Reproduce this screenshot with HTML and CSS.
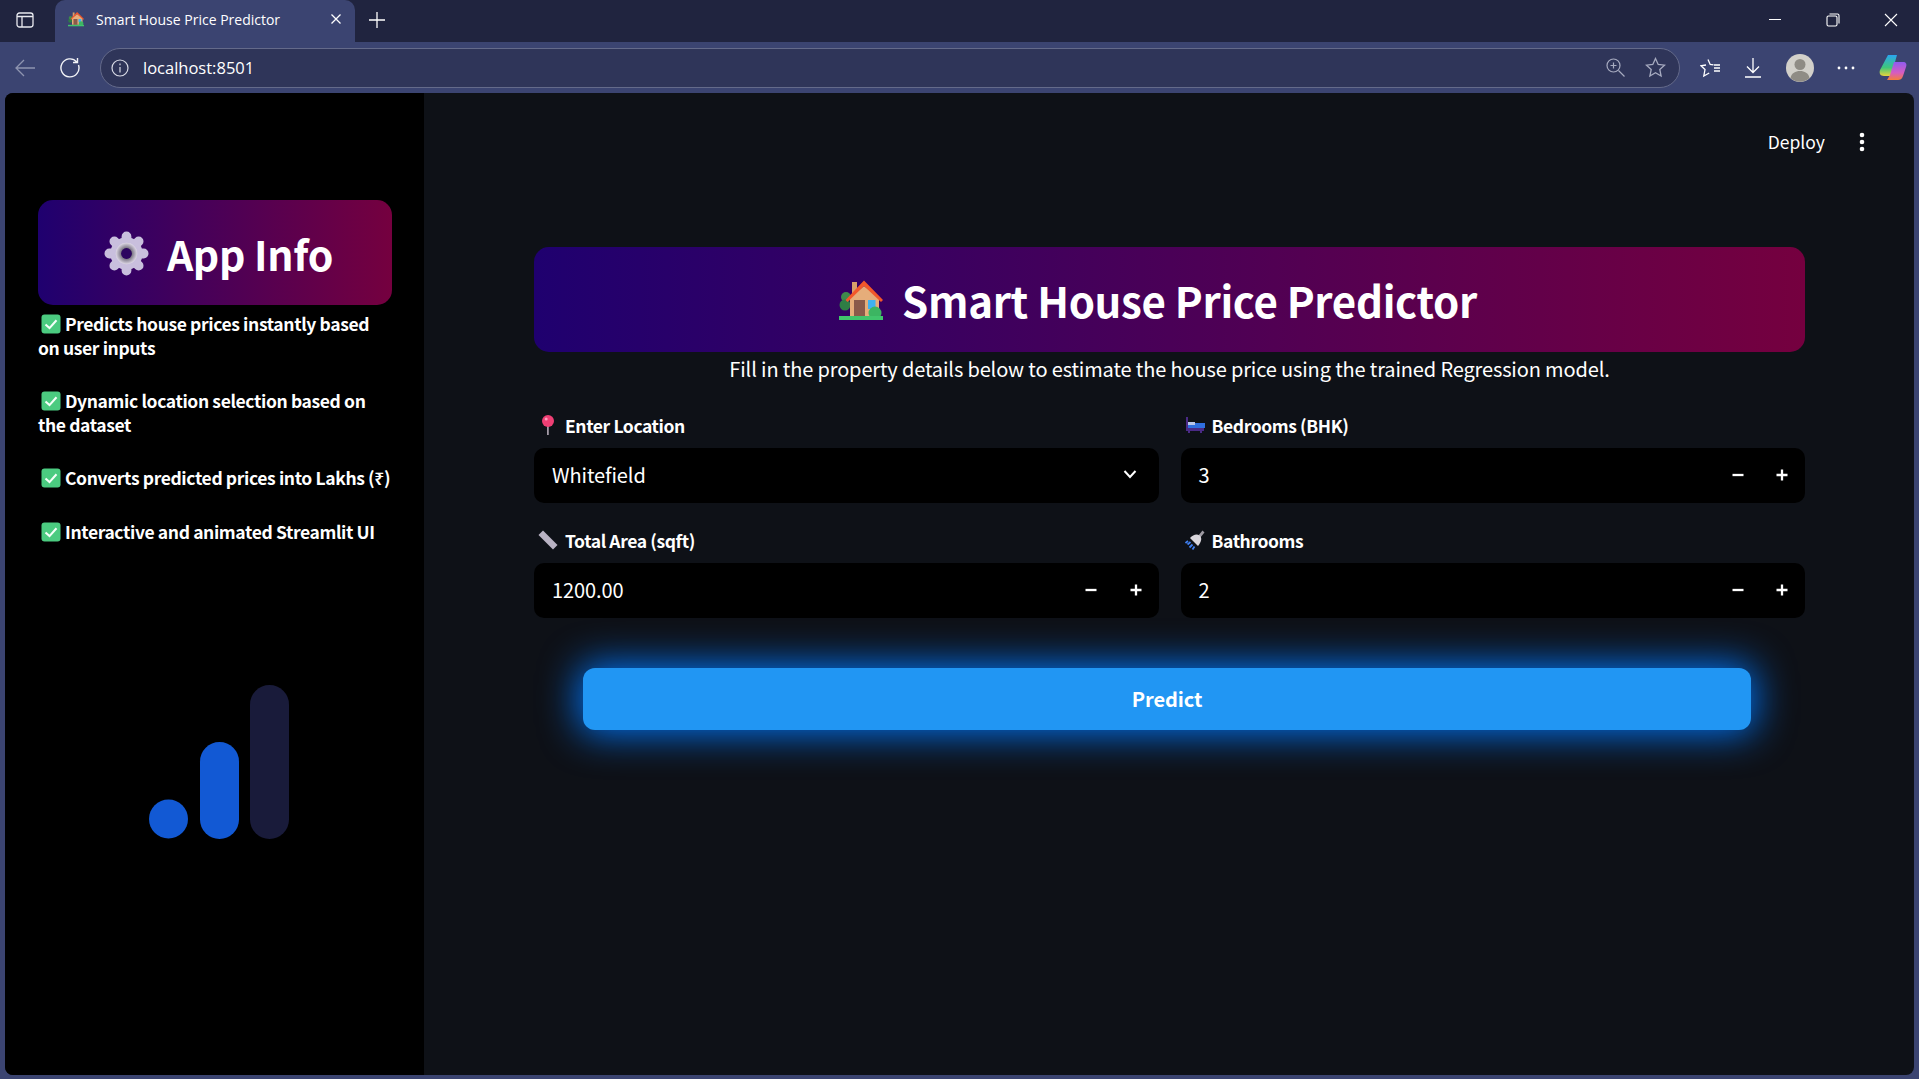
FILE: index.html
```html
<!DOCTYPE html>
<html lang="en">
<head>
    <meta charset="UTF-8">
    <meta name="viewport" content="width=device-width, initial-scale=1.0">
    <title>Smart House Price Predictor</title>
    <link rel="stylesheet" href="styles.css">
</head>
<body>

<svg class="defs" width="0" height="0">
    <symbol id="check" viewBox="0 0 20 20">
        <rect x="0.5" y="0.5" width="19" height="19" rx="3" fill="#4bcb80"/>
        <path d="M4.500 10.500l4 3.600 7-7.800" fill="none" stroke="#f4fff8" stroke-width="2.100"/>
    </symbol>
    <symbol id="minus" viewBox="0 0 12 12"><path d="M0.500 6h11" stroke="#fff" stroke-width="2.300"/></symbol>
    <symbol id="plus" viewBox="0 0 12 12"><path d="M0.500 6h11M6 0.500v11" stroke="#fff" stroke-width="2.300"/></symbol>
    <symbol id="house" viewBox="0 0 44 40">
        <circle cx="7" cy="17" r="5" fill="#3f8a4c"/>
        <circle cx="6" cy="25" r="5.500" fill="#2f7d45"/>
        <rect x="13" y="2" width="5" height="14" fill="#d8a06a"/>
        <path d="M11 18L25 6l15 12v18H11z" fill="#e6ad7a"/>
        <path d="M6.500 20L25 0.500 44 20l-2 2L25 6 8.500 22z" fill="#f2572b"/>
        <rect x="15" y="20" width="11" height="16" fill="#8a5a4a"/>
        <rect x="29" y="20" width="7.500" height="9" fill="#3fb1f0"/>
        <circle cx="36" cy="33" r="6.500" fill="#3cb562"/>
        <rect x="0" y="36" width="44" height="4" fill="#41c46c"/>
    </symbol>
    <symbol id="pin" viewBox="0 0 16 20">
        <path d="M7 10h1.800v10H7z" fill="#a39aa6"/>
        <circle cx="8" cy="6" r="6" fill="#ee3f74"/>
        <circle cx="6.200" cy="4" r="1.500" fill="#ff9dbb"/>
    </symbol>
    <symbol id="ruler" viewBox="0 0 20 20">
        <path d="M5 0.500L19.500 15 15 19.500 0.500 5z" fill="#b9b3c4"/>
    </symbol>
    <symbol id="bed" viewBox="0 0 20 18">
        <path d="M1 1h2v6h16v8h-2v2h-2v-2H5v2H3v-2H1z" fill="#4a2a86"/>
        <rect x="3" y="7" width="17" height="5" fill="#2f6fe0"/>
        <rect x="3" y="6" width="7" height="3" fill="#b9c6ea"/>
    </symbol>
    <symbol id="shower" viewBox="0 0 20 20">
        <path d="M13 6l4.500-5.500 2 2L15 8z" fill="#9d9aa3"/>
        <path d="M5 8c3-3.500 7-4.500 9.500-2.500S17 11 13 16z" fill="#d9d6dc"/>
        <path d="M5.500 12l-3 2.500M7.500 14.500l-3 3M3 11L0.500 13M9.500 16.500l-2 3" stroke="#3f7ff0" stroke-width="1.800"/>
    </symbol>
</svg>

<div class="tabstrip">
    <svg class="sidetab-icon" width="18" height="18" viewBox="0 0 18 18" fill="none" stroke="#e8e9ef" stroke-width="1.300">
        <rect x="1" y="2" width="16" height="14" rx="2.500"/>
        <path d="M1 5.500h16M6 5.500V16"/>
    </svg>
    <div class="tab">
        <svg class="tab-favicon" width="16" height="16"><use href="#house"/></svg>
        <span class="tab-title">Smart House Price Predictor</span>
        <svg class="tab-close" width="12" height="12" viewBox="0 0 12 12" stroke="#fff" stroke-width="1.300"><path d="M1.500 1.500l9 9M10.500 1.500l-9 9"/></svg>
    </div>
    <svg class="newtab" width="18" height="18" viewBox="0 0 18 18" stroke="#fff" stroke-width="1.300"><path d="M9 1v16M1 9h16"/></svg>
    <div class="window-controls">
        <svg width="14" height="14" viewBox="0 0 14 14" stroke="#fff" stroke-width="1"><path d="M1 6.500h12"/></svg>
        <svg width="14" height="14" viewBox="0 0 14 14" fill="none" stroke="#fff" stroke-width="1.100"><rect x="1" y="3" width="10" height="10" rx="1.500"/><path d="M3.500 1H11.500a1.500 1.500 0 0 1 1.500 1.500v8"/></svg>
        <svg width="14" height="14" viewBox="0 0 14 14" stroke="#fff" stroke-width="1.100"><path d="M1 1l12 12M13 1L1 13"/></svg>
    </div>
</div>

<div class="toolbar">
    <svg width="22" height="20" viewBox="0 0 22 20" fill="none" stroke="#8e94b0" stroke-width="1.300"><path d="M21 10H2M10 2l-8 8 8 8"/></svg>
    <svg class="reload" width="22" height="22" viewBox="0 0 22 22" fill="none" stroke="#f2f3f7" stroke-width="1.400"><path d="M18.500 8a9 9 0 1 1-1.700-3M17.500 1v4.500H13"/></svg>
    <div class="addressbar">
        <svg width="18" height="18" viewBox="0 0 18 18" fill="none" stroke="#d9dbe6" stroke-width="1.200"><circle cx="9" cy="9" r="8"/><path d="M9 8v5.500M9 4.500v1.800"/></svg>
        <span class="url">localhost:8501</span>
        <svg class="addr-zoom" width="19" height="19" viewBox="0 0 19 19" fill="none" stroke="#a7abc0" stroke-width="1.200"><circle cx="7.500" cy="7.500" r="6.500"/><path d="M12.500 12.500l6 6M7.500 4.500v6M4.500 7.500h6"/></svg>
        <svg width="21" height="21" viewBox="0 0 21 21" fill="none" stroke="#a7abc0" stroke-width="1.300"><path d="M10.500 1.500l2.700 6 6.300.7-4.700 4.300 1.300 6.500-5.600-3.300L4.900 19l1.300-6.500L1.500 8.200l6.300-.7z"/></svg>
    </div>
    <div class="toolbar-icons">
        <svg width="21" height="20" viewBox="0 0 21 20" fill="none" stroke="#fff" stroke-width="1.300"><path d="M8 1.500l2.200 5 3.300.4M6 7L1 7.800l4 3.800-1.200 6.400 5.400-3M14 10h6M14 13h6M14 7h6"/></svg>
        <svg width="18" height="21" viewBox="0 0 18 21" fill="none" stroke="#fff" stroke-width="1.300"><path d="M9 1v14M3 9.500L9 15.500l6-6M1 20h16"/></svg>
        <svg class="avatar" width="28" height="28" viewBox="0 0 28 28">
            <circle cx="14" cy="14" r="14" fill="#d2d0ca"/>
            <circle cx="14" cy="10.500" r="5.500" fill="#8f8c85"/>
            <path d="M4.500 24c1-5 5-7 9.500-7s8.500 2 9.500 7a14 14 0 0 1-19 0z" fill="#8f8c85"/>
        </svg>
        <svg width="18" height="4" viewBox="0 0 18 4" fill="#fff"><circle cx="2" cy="2" r="1.400"/><circle cx="9" cy="2" r="1.400"/><circle cx="16" cy="2" r="1.400"/></svg>
        <svg width="28" height="28" viewBox="0 0 28 28">
            <defs>
                <linearGradient id="cp1" x1="0" y1="0" x2="0" y2="1"><stop offset="0" stop-color="#2aa5f0"/><stop offset="0.6" stop-color="#3fc77a"/><stop offset="1" stop-color="#e8d23c"/></linearGradient>
                <linearGradient id="cp2" x1="0" y1="0" x2="0" y2="1"><stop offset="0" stop-color="#8f5cf0"/><stop offset="0.6" stop-color="#d65cc0"/><stop offset="1" stop-color="#f57c3a"/></linearGradient>
            </defs>
            <path d="M9 1h9l-6 21H5C1 22 0 19 1 16z" fill="url(#cp1)"/>
            <path d="M15 8h9c3 0 4 2 3 5l-3 9c-1 3-3 4-5 4H8l3-5z" fill="url(#cp2)"/>
        </svg>
    </div>
</div>

<div class="viewport">
    <aside class="sidebar">
        <div class="banner sidebar-banner">
            <h2>
                <svg class="gear" width="45" height="45" viewBox="0 0 46 46">
                    <defs>
                        <radialGradient id="gearhub"><stop offset="0.45" stop-color="#6f6a78"/><stop offset="1" stop-color="#ded8e6"/></radialGradient>
                    </defs>
                    <circle cx="23" cy="23" r="16.500" fill="#c9bfdd"/>
                    <g stroke="#c9bfdd" stroke-width="10" stroke-linecap="round">
                        <path d="M23 5.500v35M5.500 23h35M10.600 10.600l24.800 24.800M35.400 10.600L10.600 35.400"/>
                    </g>
                    <circle cx="23" cy="23" r="11" fill="url(#gearhub)"/>
                    <circle cx="23" cy="23" r="5.500" fill="#2d0560"/>
                </svg>
                App Info
            </h2>
        </div>
        <ul class="features">
            <li><svg class="check"><use href="#check"/></svg>Predicts house prices instantly based on user inputs</li>
            <li><svg class="check"><use href="#check"/></svg>Dynamic location selection based on the dataset</li>
            <li><svg class="check"><use href="#check"/></svg>Converts predicted prices into Lakhs (₹)</li>
            <li><svg class="check"><use href="#check"/></svg>Interactive and animated Streamlit UI</li>
        </ul>
        <svg class="bars" width="140" height="154" viewBox="0 0 140 154">
            <circle cx="19.500" cy="134" r="19.500" fill="#1259d4"/>
            <rect x="51" y="57" width="39" height="97" rx="19.500" fill="#1259d4"/>
            <rect x="101" y="0" width="39" height="154" rx="19.500" fill="#191b3a"/>
        </svg>
    </aside>

    <main class="main">
        <div class="topbar">
            <span class="deploy">Deploy</span>
            <svg class="kebab" width="6" height="20" viewBox="0 0 6 20" fill="#fff"><circle cx="3" cy="3" r="2.300"/><circle cx="3" cy="10" r="2.300"/><circle cx="3" cy="17" r="2.300"/></svg>
        </div>
        <div class="content">
            <div class="banner main-banner">
                <h1><svg class="house" width="44" height="40"><use href="#house"/></svg>Smart House Price Predictor</h1>
            </div>
            <p class="intro">Fill in the property details below to estimate the house price using the trained Regression model.</p>
            <div class="form">
                <div class="field">
                    <label><svg class="label-icon"><use href="#pin"/></svg>Enter Location</label>
                    <div class="control">
                        <span class="value">Whitefield</span>
                        <svg class="chevron" width="14" height="9" viewBox="0 0 14 9" fill="none" stroke="#fff" stroke-width="2"><path d="M1.500 1l5.500 6 5.500-6"/></svg>
                    </div>
                </div>
                <div class="field">
                    <label><svg class="label-icon"><use href="#bed"/></svg>Bedrooms (BHK)</label>
                    <div class="control">
                        <span class="value">3</span>
                        <svg class="step"><use href="#minus"/></svg>
                        <svg class="step"><use href="#plus"/></svg>
                    </div>
                </div>
                <div class="field">
                    <label><svg class="label-icon"><use href="#ruler"/></svg>Total Area (sqft)</label>
                    <div class="control">
                        <span class="value">1200.00</span>
                        <svg class="step"><use href="#minus"/></svg>
                        <svg class="step"><use href="#plus"/></svg>
                    </div>
                </div>
                <div class="field">
                    <label><svg class="label-icon"><use href="#shower"/></svg>Bathrooms</label>
                    <div class="control">
                        <span class="value">2</span>
                        <svg class="step"><use href="#minus"/></svg>
                        <svg class="step"><use href="#plus"/></svg>
                    </div>
                </div>
            </div>
            <button class="predict">Predict</button>
        </div>
    </main>
</div>

</body>
</html>
```

FILE: styles.css
```css
html, body {
    height: 100%;
}
body {
    margin: 0;
    background-color: #3b4471;
    color: #fff;
    font-family: "Noto Sans CJK SC", "Noto Sans", sans-serif;
    display: flex;
    flex-direction: column;
    overflow: hidden;
}
.defs {
    position: absolute;
}

/* browser chrome */
.tabstrip {
    height: 42px;
    box-sizing: border-box;
    padding-bottom: 2px;
    background-color: #20243f;
    display: flex;
    align-items: center;
    font-family: "Open Sans", sans-serif;
    flex-shrink: 0;
}
.sidetab-icon {
    margin-left: 16px;
    margin-right: 21px;
}
.tab {
    align-self: flex-end;
    width: 300px;
    height: 42px;
    margin-bottom: -2px;
    box-sizing: border-box;
    background-color: #3b4471;
    border-radius: 10px 10px 0 0;
    display: flex;
    align-items: center;
    padding: 0 13px 4px 13px;
    font-size: 14px;
}
.tab-favicon {
    margin-right: 12px;
}
.tab-title {
    flex: 1;
}
.newtab {
    margin-left: 13px;
}
.window-controls {
    margin-left: auto;
    display: flex;
    gap: 44px;
    padding-right: 21px;
}
.toolbar {
    height: 51px;
    flex-shrink: 0;
    display: flex;
    align-items: center;
    padding-left: 14px;
    gap: 15px;
    font-family: "Open Sans", sans-serif;
}
.reload {
    margin-left: 9px;
}
.addressbar {
    width: 1580px;
    height: 40px;
    box-sizing: border-box;
    margin-left: 3px;
    background-color: #2f3559;
    border: 1px solid #646a8a;
    border-radius: 20px;
    display: flex;
    align-items: center;
    padding: 0 13px 0 10px;
}
.url {
    margin-left: 14px;
    font-size: 16.500px;
    flex: 1;
}
.addr-zoom {
    margin-right: 20px;
}
.toolbar-icons {
    display: flex;
    align-items: center;
    gap: 23.500px;
    margin-left: 4.500px;
}

/* streamlit page */
.viewport {
    flex: 1;
    display: flex;
    margin: 0 5px 4px;
    border-radius: 8px;
    overflow: hidden;
    background-color: #0e1117;
}
.sidebar {
    width: 419px;
    flex-shrink: 0;
    box-sizing: border-box;
    background-color: #000;
    padding: 107px 32px 0 33px;
}
.banner {
    background: linear-gradient(90deg, #1f006f, #75003f);
    border-radius: 15px;
    height: 105px;
    display: flex;
    align-items: center;
    justify-content: center;
}
.banner h1, .banner h2 {
    margin: 0;
    font-weight: 700;
    display: flex;
    align-items: center;
    line-height: 1;
}
.sidebar-banner h2 {
    font-size: 41px;
    font-weight: 600;
    letter-spacing: -0.300px;
    gap: 18px;
    padding: 2px 0 0 7px;
}
.main-banner h1 {
    font-size: 42px;
    letter-spacing: -0.330px;
    gap: 19px;
    padding: 1px 23px 0 0;
}
.features {
    list-style: none;
    margin: 7px 0 0;
    padding: 0;
    font-size: 17.500px;
    font-weight: 600;
    letter-spacing: -0.380px;
    line-height: 24px;
}
.features li {
    margin-bottom: 29px;
}
.features li:nth-child(3) {
    margin-bottom: 30px;
}
.check {
    width: 20px;
    height: 20px;
    margin: 0 4px 0 3px;
    vertical-align: -3px;
}
.bars {
    display: block;
    margin: 141px 0 0 111px;
}
.main {
    flex: 1;
    min-width: 0;
    padding: 0 109px 0 110px;
}
.topbar {
    height: 56px;
    margin-right: -60px;
    display: flex;
    justify-content: flex-end;
    align-items: flex-end;
    font-size: 17.500px;
}
.deploy {
    line-height: 27px;
    margin-bottom: -6px;
}
.kebab {
    margin: 0 0 -3px 34px;
}
.content {
    padding-top: 98px;
}
.intro {
    margin: 4px 0 0;
    font-size: 20px;
    letter-spacing: -0.140px;
    line-height: 26px;
    text-align: center;
}
.form {
    display: grid;
    grid-template-columns: 1fr 1fr;
    column-gap: 22px;
    row-gap: 20px;
    margin-top: 26px;
}
.field label {
    display: flex;
    align-items: center;
    height: 34px;
    font-size: 17.500px;
    font-weight: 600;
    letter-spacing: -0.400px;
    margin-bottom: 6px;
}
.label-icon {
    width: 20px;
    height: 20px;
    margin: 0 7px 0 4px;
}
.control {
    height: 55px;
    box-sizing: border-box;
    padding: 0 17px 2px 18px;
    background-color: #000;
    border-radius: 10px;
    display: flex;
    align-items: center;
    gap: 32.500px;
    font-size: 20px;
    letter-spacing: -0.100px;
}
.value {
    flex: 1;
}
.step {
    width: 12px;
    height: 12px;
}
.chevron {
    margin-right: 5px;
}
.predict {
    display: block;
    width: 1168px;
    height: 62px;
    margin: 49.500px 0 0 49px;
    border: 0;
    border-radius: 12px;
    background-color: #2196f3;
    color: #fff;
    font-family: inherit;
    font-size: 20px;
    font-weight: 600;
    letter-spacing: -0.100px;
    box-shadow: 0 0 38px 4px rgba(0, 120, 255, 0.95);
}
```
